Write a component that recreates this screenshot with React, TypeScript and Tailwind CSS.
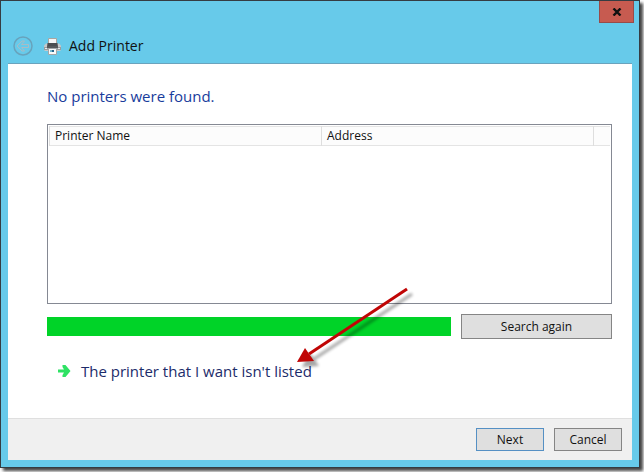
const COLUMNS = [
  { label: 'Printer Name', width: 'w-[272px]' },
  { label: 'Address', width: 'w-[272px]' },
]

function BackIcon() {
  return (
    <svg viewBox="0 0 20 20" className="size-5" fill="none" aria-hidden="true">
      <circle cx="10" cy="10" r="9" stroke="#68a3bc" strokeWidth="1.5" />
      <path
        d="M4 10 9 5H11.5L8.5 8.500H15.500V11.500H8.5L11.500 15H9Z"
        stroke="#a9bcc4"
        strokeLinejoin="round"
      />
    </svg>
  )
}

function PrinterIcon() {
  return (
    <svg viewBox="0 0 17 17" className="size-[17px]" aria-hidden="true">
      <path d="M4.500 0.500h8V6h-8Z" fill="#f6f6f6" stroke="#a9a5a0" />
      <path d="M2 5.500h13l2 2V12l-1 1H1l-1-1V7.500Z" fill="#c6c8ca" />
      <path d="M0 9h17v3H0Z" fill="#9a9da0" />
      <path d="M3.500 5h10l.5 4H3Z" fill="#4b4d50" />
      <path d="M3 8h11v2H3Z" fill="#56585b" />
      <path d="M1 10h2v1H1ZM14 10h2v1h-2Z" fill="#e9eaeb" />
      <path d="M4.500 10.500h8v6h-8Z" fill="#fafafa" stroke="#a3a6a8" />
      <path d="M6 12h3v2H6Z" fill="#73b8cf" />
      <path d="M8 12h2v2H8Z" fill="#28658b" />
    </svg>
  )
}

function GoIcon() {
  return (
    <svg viewBox="0 0 14 14" className="size-3.5 shrink-0" aria-hidden="true">
      <path d="M1 5.500H7L5.500 3V1H8.500L13.500 7 8.500 13H5.500V11L7 8.500H1Z" fill="#2fe264" />
    </svg>
  )
}

function PointerArrow() {
  return (
    <svg viewBox="0 0 124 88" className="h-[88px] w-[124px]" aria-hidden="true">
      <defs>
        <filter id="soft" x="-20%" y="-20%" width="140%" height="140%">
          <feGaussianBlur stdDeviation="1.500" />
        </filter>
      </defs>
      <g transform="translate(5 5)" filter="url(#soft)" opacity="0.350">
        <path d="M112 3 14 68" stroke="#000" strokeWidth="3" />
        <path d="M2 76 10 62 19 75Z" fill="#000" />
      </g>
      <path d="M112 3 14 68" stroke="#c00505" strokeWidth="3" />
      <path d="M2 76 10 62 19 75Z" fill="#c00505" />
    </svg>
  )
}

export default function App() {
  return (
    <div className="flex min-h-screen bg-white pr-1 pb-1 font-['Open_Sans','Noto_Sans',sans-serif] text-xs text-[#111]">
      <div className="flex flex-1 flex-col border border-[#353c42] bg-[#67caea] px-[7px] pb-[7px] shadow-[3px_3px_3px_#444]">
        <header>
          <div className="-mr-0.5 flex justify-end">
            <button
              type="button"
              aria-label="Close"
              className="flex h-[22px] w-[35px] items-center justify-center border border-t-0 border-[#984b49] bg-[#c75b50]"
            >
              <svg viewBox="0 0 10 8" className="h-2 w-2.5" aria-hidden="true">
                <path d="M1.500 0.500 8.500 7.500M8.500 0.500 1.500 7.500" stroke="#111" strokeWidth="2.400" />
              </svg>
            </button>
          </div>
          <div className="flex items-center pt-[13px] pb-[7px] pl-[5px]">
            <button type="button" aria-label="Back" disabled>
              <BackIcon />
            </button>
            <div className="ml-[11px] flex items-center gap-2">
              <PrinterIcon />
              <h1 className="text-sm leading-5">Add Printer</h1>
            </div>
          </div>
        </header>

        <div className="flex flex-1 flex-col border-t border-[#6aa3bd] bg-white">
          <main className="flex flex-1 flex-col pr-5 pl-[39px]">
            <h2 className="mt-5 text-[15px] leading-6 text-[#183c9c]">No printers were found.</h2>

            <div className="mt-4 h-[180px] border border-[#858993] p-px">
              <table className="w-full table-fixed border-collapse">
                <thead>
                  <tr className="h-[19px] border-y border-[#e4e4e4] bg-[#fcfcfc]">
                    {COLUMNS.map((column) => (
                      <th
                        key={column.label}
                        scope="col"
                        className={`${column.width} border-r border-l border-[#dedede] px-[5px] text-left leading-[18px] font-normal`}
                      >
                        {column.label}
                      </th>
                    ))}
                    <td />
                  </tr>
                </thead>
                <tbody />
              </table>
            </div>

            <div className="relative">
              <div className="mt-2.5 flex items-center gap-2.5">
                <div
                  role="progressbar"
                  aria-label="Printer search"
                  aria-valuenow={100}
                  className="h-[19px] flex-1 bg-[#00d328]"
                />
                <button
                  type="button"
                  className="h-[25px] w-[151px] border border-[#858585] bg-[#dfdfdf]"
                >
                  Search again
                </button>
              </div>
              <a
                href="#manual"
                className="mt-5 ml-2.5 inline-flex items-center gap-2.5 text-[15px] leading-6 text-[#1c2c6a]"
              >
                <GoIcon />
                The printer that I want isn't listed
              </a>
              <div className="pointer-events-none absolute -top-[18px] left-[248px]">
                <PointerArrow />
              </div>
            </div>
          </main>

          <footer className="flex items-start justify-end gap-2.5 border-t border-[#dfdfdf] bg-[#f0f0f0] px-2.5 pt-[9px] pb-[9px]">
            <button type="button" className="h-[23px] w-[68px] border border-[#5590c4] bg-[#dfdfdf]">
              Next
            </button>
            <button type="button" className="h-[23px] w-[68px] border border-[#858585] bg-[#dfdfdf]">
              Cancel
            </button>
          </footer>
        </div>
      </div>
    </div>
  )
}
